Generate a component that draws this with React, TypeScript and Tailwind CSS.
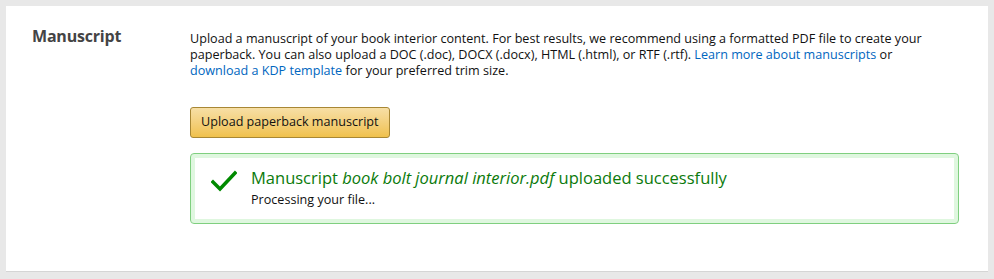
import React from "react";

export default function App() {
  return (
    <div className="w-[994px] h-[279px] bg-[#e8e8e8] p-[6px] pb-[7px]" style={{ fontFamily: '"Open Sans", Arial, sans-serif' }}>
      <div className="h-full bg-white border-b border-[#d5d5d5] flex pl-[26px] pr-[27px] pt-[22px]">
        <div className="w-[158px] shrink-0">
          <h2 className="text-[16px] font-bold text-[#444] leading-[18px] tracking-[-0.2px] -mt-[1px]">Manuscript</h2>
        </div>
        <div className="w-[769px] shrink-0 pt-[3px]">
          <p className="text-[12.6px] leading-[16px] text-[#111] whitespace-nowrap">
            Upload a manuscript of your book interior content. For best results, we recommend using a formatted PDF file to create your
            <br />
            paperback. You can also upload a DOC (.doc), DOCX (.docx), HTML (.html), or RTF (.rtf).{" "}
            <a className="text-[#0066c0]">Learn more about manuscripts</a> or
            <br />
            <a className="text-[#0066c0]">download a KDP template</a> for your preferred trim size.
          </p>
          <button className="block mt-[28px] h-[31px] px-[10px] rounded-[3px] border border-[#a88734] bg-gradient-to-b from-[#f7dfa5] to-[#f0c14b] text-[12.6px] text-[#111]">
            Upload paperback manuscript
          </button>
          <div className="mt-[15px] h-[71px] rounded-[4px] border border-[#7fcf7f] shadow-[inset_0_0_0_4px_#dff7df] flex items-start pl-[20px] pt-[13px]">
            <svg width="26" height="22" viewBox="0 0 26 22" className="mt-[3px] mr-[14px] shrink-0">
              <polyline points="2,12 9,19 24,3" fill="none" stroke="#008a00" strokeWidth="3.5" strokeLinecap="square" />
            </svg>
            <div>
              <div className="text-[16.5px] leading-[22px] text-[#0b7a0b]">
                Manuscript <i>book bolt journal interior.pdf</i> uploaded successfully
              </div>
              <div className="mt-[2px] text-[12.6px] leading-[18px] text-[#111]">Processing your file...</div>
            </div>
          </div>
        </div>
      </div>
    </div>
  );
}
